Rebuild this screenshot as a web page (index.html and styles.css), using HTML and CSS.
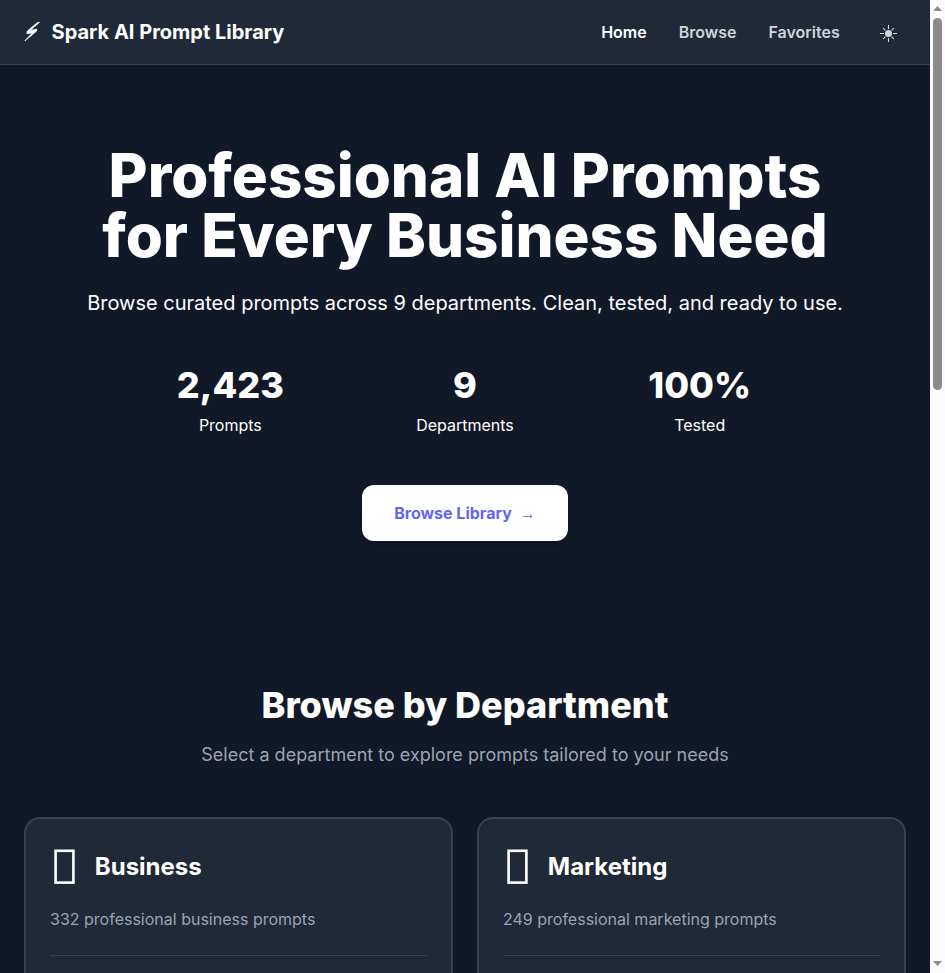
FILE: index.html
```html
<!DOCTYPE html>
<html lang="en">
<head>
<meta charset="utf-8">
<title>Spark AI Prompt Library</title>
<link rel="stylesheet" href="styles.css">
</head>
<body>
<div class="page">
  <header class="header">
    <div class="logo">
      <svg class="logo-icon" width="16" height="32" viewBox="0 0 16 32"><path d="M15.4 6.4L6 14.4L12.8 13.2L12.4 15.2L.9 24.9L8.3 16.9L2.8 17.6L3.3 15.1L13.6 6.4Z"/></svg>
      <span>Spark AI Prompt Library</span>
    </div>
    <nav class="nav">
      <a class="active">Home</a>
      <a>Browse</a>
      <a>Favorites</a>
      <button class="theme" aria-label="Theme">
        <svg width="17" height="28" viewBox="0 0 17 28"><circle cx="8.5" cy="15.5" r="3.5"/><path d="M8.5 7v4M8.5 20v4M0 15.5h4M13 15.5h4M3.2 10.2l2.2 2.2M11.6 18.6l2.2 2.2M3.2 20.8l2.2-2.2M11.6 12.4l2.2-2.2"/></svg>
      </button>
    </nav>
  </header>
  <section class="hero">
    <h1>Professional AI Prompts for Every Business Need</h1>
    <p class="lead">Browse curated prompts across 9 departments. Clean, tested, and ready to use.</p>
    <div class="stats">
      <div><div class="number">2,423</div><div class="label">Prompts</div></div>
      <div><div class="number">9</div><div class="label">Departments</div></div>
      <div><div class="number">100%</div><div class="label">Tested</div></div>
    </div>
    <a class="cta"><span>Browse Library</span><span class="arrow">→</span></a>
  </section>
  <section class="departments">
    <h2>Browse by Department</h2>
    <p class="sub">Select a department to explore prompts tailored to your needs</p>
    <div class="grid">
      <article class="card">
        <div class="card-head"><svg class="card-icon" width="45" height="48"><rect x="5.6" y="7.8" width="17.8" height="31.8"/></svg><h3>Business</h3></div>
        <p>332 professional business prompts</p>
        <hr>
      </article>
      <article class="card">
        <div class="card-head"><svg class="card-icon" width="45" height="48"><rect x="5.6" y="7.8" width="17.8" height="31.8"/></svg><h3>Marketing</h3></div>
        <p>249 professional marketing prompts</p>
        <hr>
      </article>
    </div>
  </section>
</div>
<div class="scrollbar">
  <svg width="9" height="5" viewBox="0 0 9 5"><path d="M0 5L4.5 0L9 5Z"/></svg>
  <div class="thumb"></div>
  <svg width="9" height="5" viewBox="0 0 9 5"><path d="M0 0L4.5 5L9 0Z"/></svg>
</div>
</body>
</html>
```
FILE: styles.css
```css
* { box-sizing: border-box; margin: 0; padding: 0; }
body {
  display: flex;
  height: 973px;
  overflow: hidden;
  background: #111827;
  color: #fff;
  font-family: Inter, sans-serif;
  font-size: 16px;
  line-height: 24px;
}
.page { flex: 1; height: 973px; overflow: hidden; }
.header {
  display: flex;
  align-items: center;
  justify-content: space-between;
  height: 65px;
  padding: 0 24px;
  background: #1f2937;
  border-bottom: 1px solid #374151;
}
.logo { display: flex; align-items: center; gap: 11.6px; font-size: 20px; line-height: 28px; font-weight: 700; }
.logo-icon { fill: #fff; stroke: #fff; stroke-width: .8; stroke-linejoin: round; }
.nav { display: flex; align-items: center; gap: 32px; font-weight: 600; color: #d1d5db; }
.nav .active { color: #fff; }
.theme { display: flex; padding: 8px 9px 8px 8.3px; border: 0; background: none; }
.theme svg { fill: #d1d5db; stroke: #d1d5db; stroke-width: 1.1; }
.theme circle { stroke: none; }
.hero { padding: 80px 24px; text-align: center; }
h1 { width: 800px; margin: 0 auto 24px; font-size: 60px; line-height: 60px; font-weight: 800; }
.lead { font-size: 20px; line-height: 28px; margin-bottom: 48px; }
.stats { display: grid; grid-template-columns: repeat(3, 1fr); gap: 32px; width: 672px; margin: 0 auto 48px; }
.number { font-size: 36px; line-height: 40px; font-weight: 800; margin-bottom: 8px; }
.cta {
  display: inline-flex;
  gap: 8px;
  padding: 16px 32px;
  border-radius: 12px;
  background: #fff;
  color: #6366f1;
  font-weight: 700;
  box-shadow: 0 10px 15px -3px rgba(0, 0, 0, .1), 0 4px 6px -4px rgba(0, 0, 0, .1);
  vertical-align: top;
}
.arrow { height: 24px; padding-top: 1px; font-family: "Liberation Sans", sans-serif; }
.departments { padding: 64px 24px; text-align: center; }
h2 { font-size: 36px; line-height: 40px; font-weight: 800; margin-bottom: 16px; }
.sub { font-size: 18px; line-height: 28px; color: #9ca3af; margin-bottom: 48px; }
.grid { display: grid; grid-template-columns: 1fr 1fr; gap: 24px; text-align: left; }
.card { height: 220px; padding: 24px; border: 2px solid #374151; border-radius: 16px; background: #1f2937; }
.card-head { display: flex; align-items: center; height: 48px; margin-bottom: 16px; }
.card-icon { fill: none; stroke: #fff; stroke-width: 2.6; }
h3 { font-size: 24px; line-height: 32px; font-weight: 700; margin-left: -.2px; }
.card p { color: #9ca3af; margin-bottom: 24px; }
.card hr { border: 0; border-top: 1px solid #374151; }
.scrollbar {
  display: flex;
  flex-direction: column;
  align-items: center;
  width: 15px;
  height: 973px;
  padding: 6px 0 7px;
  background: #fcfcfc;
}
.scrollbar svg { fill: #8b8b8b; display: block; }
.thumb { width: 9px; height: 372px; margin: 7px 0 auto; border-radius: 5px; background: #8b8b8b; }
```
